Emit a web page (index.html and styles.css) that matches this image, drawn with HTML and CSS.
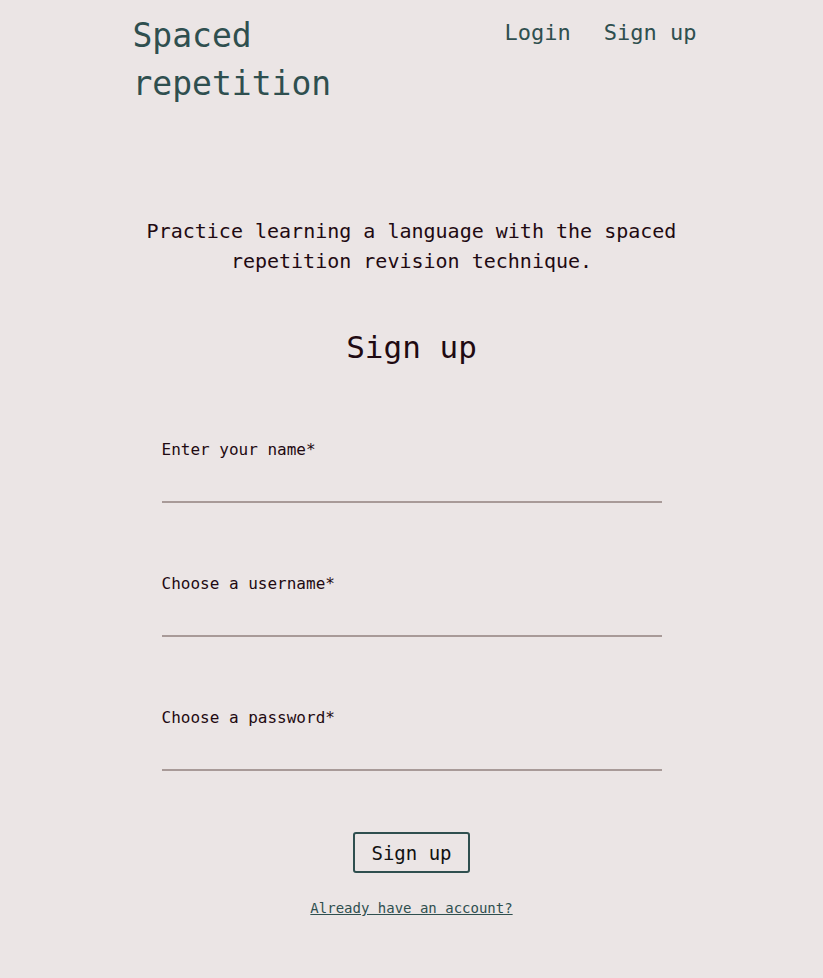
FILE: index.html
```html
<!DOCTYPE html>
<html lang="en">
<head>
<meta charset="utf-8">
<title>Spaced repetition</title>
<link rel="stylesheet" href="styles.css">
</head>
<body>
<header class="site-header">
  <a class="logo" href="#">Spaced repetition</a>
  <nav class="nav">
    <a href="#">Login</a>
    <a href="#">Sign up</a>
  </nav>
</header>
<main class="main">
  <p class="tagline">Practice learning a language with the spaced repetition revision technique.</p>
  <h2 class="title">Sign up</h2>
  <form class="form">
    <label class="field">
      <span class="label">Enter your name*</span>
      <input class="input" type="text">
    </label>
    <label class="field">
      <span class="label">Choose a username*</span>
      <input class="input" type="text">
    </label>
    <label class="field">
      <span class="label">Choose a password*</span>
      <input class="input" type="password">
    </label>
    <div class="actions">
      <button class="button" type="button">Sign up</button>
      <a class="alt-link" href="#">Already have an account?</a>
    </div>
  </form>
</main>
</body>
</html>
```

FILE: styles.css
```css
* { box-sizing: border-box; }
html, body {
  margin: 0;
  background: #ebe5e5;
  font-family: "DejaVu Sans Mono", "Liberation Mono", monospace;
  color: #1f0a12;
}
a { text-decoration: none; }
.site-header {
  width: 562px;
  margin: 0 auto;
  padding-top: 12px;
  padding-left: 2px;
  display: flex;
  justify-content: space-between;
  align-items: flex-start;
}
.logo {
  display: block;
  width: 240px;
  font-size: 33px;
  line-height: 48px;
  color: #2f4f4f;
}
.nav {
  display: flex;
  gap: 33px;
  padding-top: 6px;
  margin-right: -4px;
}
.nav a {
  font-size: 22px;
  line-height: 30px;
  color: #2f4f4f;
}
.main {
  width: 562px;
  margin: 0 auto;
  display: flex;
  flex-direction: column;
  align-items: center;
}
.tagline {
  margin: 108px 0 0;
  font-size: 20px;
  line-height: 30px;
  text-align: center;
}
.title {
  margin: 51px 0 0;
  font-size: 31px;
  line-height: 40px;
  font-weight: normal;
}
.form {
  width: 500px;
  margin-top: 73px;
  display: flex;
  flex-direction: column;
}
.field {
  display: flex;
  flex-direction: column;
  margin-bottom: 71px;
}
.label {
  font-size: 16px;
  line-height: 20px;
}
.input {
  margin-top: 11px;
  height: 32px;
  border: 0;
  border-bottom: 2px solid #a89a98;
  background: transparent;
  font: inherit;
  padding: 0;
  outline: none;
}
.actions {
  display: flex;
  flex-direction: column;
  align-items: center;
  margin-top: -10px;
}
.button {
  width: 117px;
  height: 41px;
  border: 2px solid #2f4f4f;
  border-radius: 3px;
  background: transparent;
  font-family: inherit;
  font-size: 19px;
  color: #111;
  padding: 0;
}
.alt-link {
  margin-top: 26px;
  font-size: 14px;
  line-height: 18px;
  color: #2f4f4f;
  text-decoration: underline;
}
```
